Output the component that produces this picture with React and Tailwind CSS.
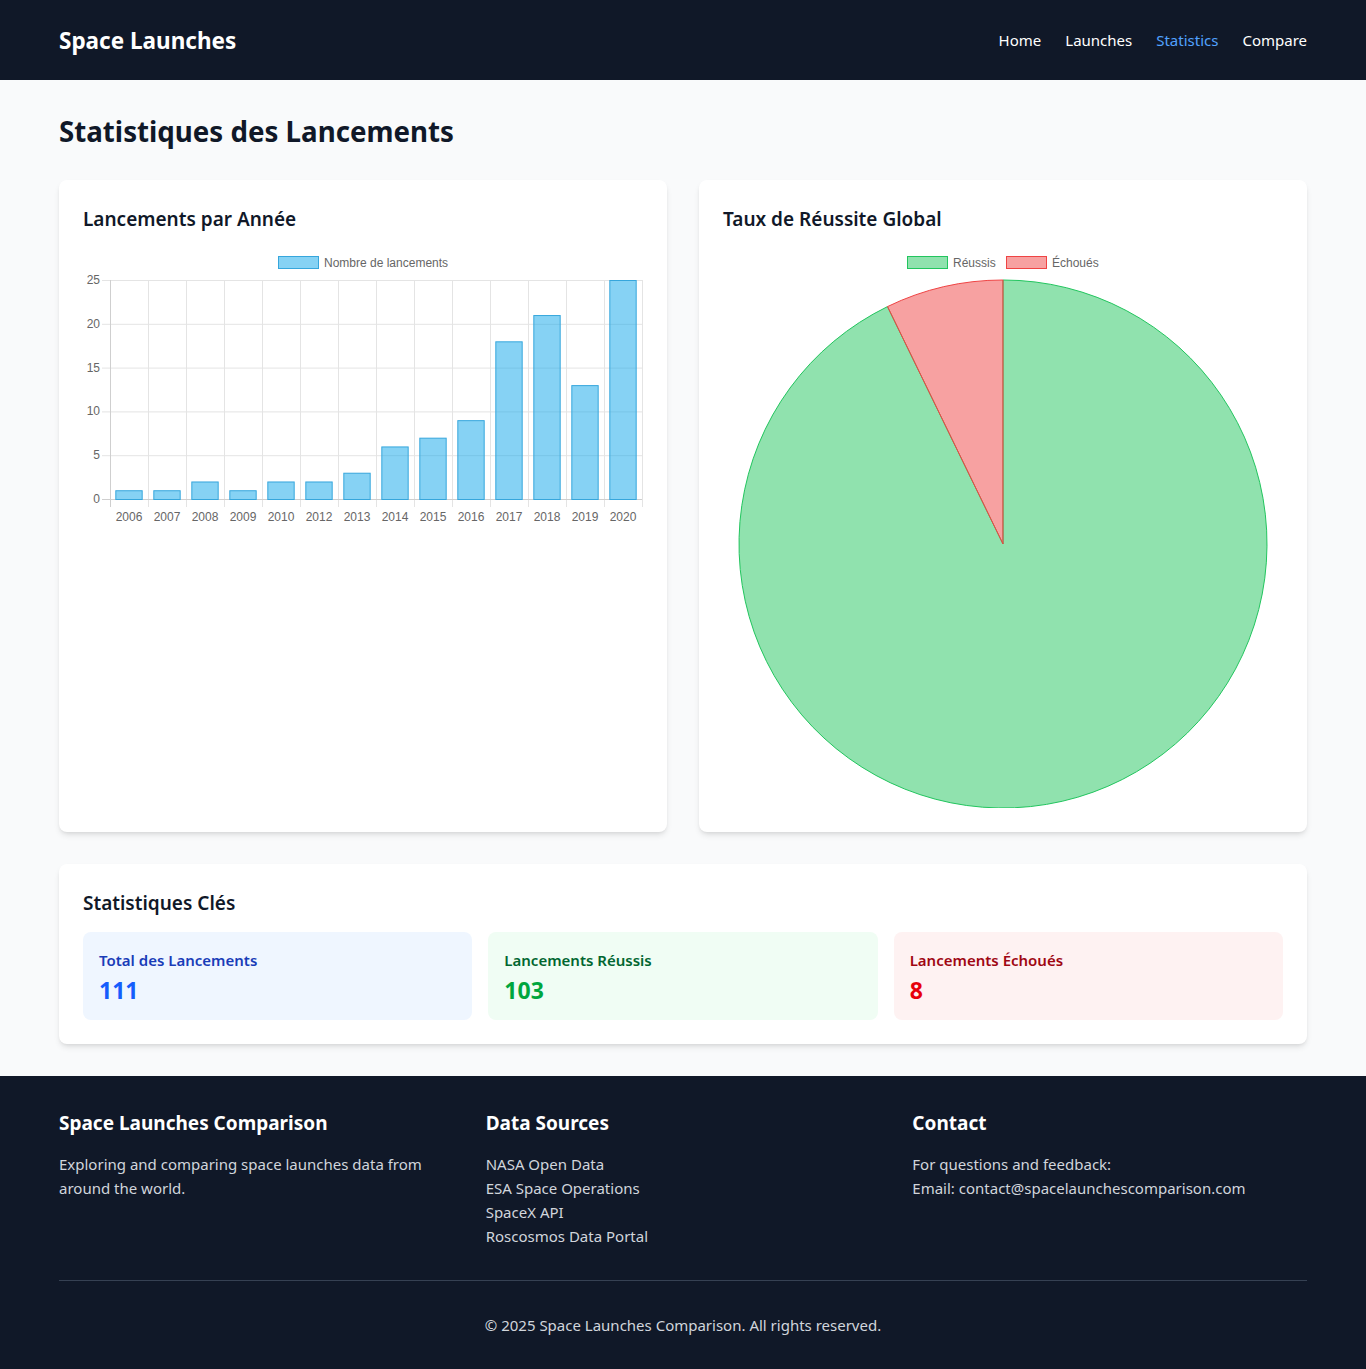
const years = [2006, 2007, 2008, 2009, 2010, 2012, 2013, 2014, 2015, 2016, 2017, 2018, 2019, 2020];
const counts = [1, 1, 2, 1, 2, 2, 3, 6, 7, 9, 18, 21, 13, 25];

function BarChart() {
  const left = 27;
  const right = 559;
  const top = 32;
  const bottom = 251;
  const step = (right - left) / years.length;
  const unit = (bottom - top) / 25;
  const barW = step * 0.72;
  return (
    <svg width="560" height="280" viewBox="0 0 560 280" className="block">
      <g fontFamily="'Liberation Sans', Arial, sans-serif" fontSize="12" fill="#666">
        <rect x="195.5" y="8.5" width="40" height="12" fill="rgba(14,165,233,0.5)" stroke="#36a6dc" />
        <text x="241" y="18.5">Nombre de lancements</text>
        {[0, 5, 10, 15, 20, 25].map(v => {
          const y = bottom - v * unit;
          return (
            <g key={v}>
              <line x1={left - 8} x2={right} y1={y + 0.5} y2={y + 0.5} stroke="#e4e4e4" />
              <text x="17" y={y + 4} textAnchor="end">{v}</text>
            </g>
          );
        })}
        {years.map((_, i) => (
          <line key={i} x1={left + step * i + 0.5} x2={left + step * i + 0.5} y1={top} y2={bottom + 8} stroke="#e4e4e4" />
        ))}
        <line x1={right + 0.5} x2={right + 0.5} y1={top} y2={bottom + 8} stroke="#e4e4e4" />
        <line x1={left + 0.5} x2={left + 0.5} y1={top} y2={bottom + 8} stroke="#cfcfcf" />
        <line x1={left - 8} x2={right} y1={bottom + 0.5} y2={bottom + 0.5} stroke="#cfcfcf" />
        {counts.map((c, i) => {
          const cx = left + step * i + step / 2;
          const h = c * unit;
          return (
            <rect key={i} x={cx - barW / 2 + 0.5} y={bottom - h + 0.5} width={barW - 1} height={h}
              fill="rgba(14,165,233,0.5)" stroke="#36a6dc" strokeWidth="1" />
          );
        })}
        {years.map((y, i) => (
          <text key={y} x={left + step * i + step / 2} y="273" textAnchor="middle">{y}</text>
        ))}
      </g>
    </svg>
  );
}

function PieChart() {
  const cx = 280;
  const cy = 296;
  const r = 264;
  const ang = (8 / 111) * Math.PI * 2;
  const px = cx - r * Math.sin(ang);
  const py = cy - r * Math.cos(ang);
  return (
    <svg width="560" height="560" viewBox="0 0 560 560" className="block">
      <g fontFamily="'Liberation Sans', Arial, sans-serif" fontSize="12" fill="#666">
        <rect x="184.5" y="8.5" width="40" height="12" fill="rgba(34,197,94,0.5)" stroke="#22c55e" />
        <text x="230" y="18.5">Réussis</text>
        <rect x="283.5" y="8.5" width="40" height="12" fill="rgba(239,68,68,0.5)" stroke="#ef4444" />
        <text x="329" y="18.5">Échoués</text>
      </g>
      <path d={`M ${cx} ${cy} L ${cx} ${cy - r} A ${r} ${r} 0 1 1 ${px} ${py} Z`}
        fill="rgba(34,197,94,0.5)" stroke="#22c55e" strokeWidth="1" />
      <path d={`M ${cx} ${cy} L ${cx} ${cy - r} A ${r} ${r} 0 0 0 ${px} ${py} Z`}
        fill="rgba(239,68,68,0.5)" stroke="#ef4444" strokeWidth="1" />
    </svg>
  );
}

function StatBox({ label, value, bg, labelColor, valueColor }) {
  return (
    <div className={`${bg} rounded-lg p-4`}>
      <div className={`${labelColor} text-[15px] leading-6 font-semibold`}>{label}</div>
      <div className={`${valueColor} text-[23px] leading-8 font-bold translate-y-[2px]`}>{value}</div>
    </div>
  );
}

export default function App() {
  return (
    <div className="min-h-screen bg-gray-50 font-['Noto_Sans',sans-serif] text-gray-900">
      <nav className="bg-gray-900 h-20">
        <div className="max-w-7xl mx-auto px-4 h-full flex items-center justify-between">
          <div className="text-white text-[22.5px] leading-8 font-bold translate-y-px">Space Launches</div>
          <div className="flex gap-6 text-[15px] leading-6 text-white">
            <a>Home</a>
            <a>Launches</a>
            <a className="text-blue-400">Statistics</a>
            <a>Compare</a>
          </div>
        </div>
      </nav>

      <main className="max-w-7xl mx-auto px-4 py-8">
        <h1 className="text-[27.7px] leading-9 font-bold mb-8 translate-y-px">Statistiques des Lancements</h1>

        <div className="grid grid-cols-2 gap-8 mb-8">
          <div className="bg-white rounded-lg shadow-md p-6">
            <h2 className="text-[19px] leading-7 font-semibold mb-4 translate-y-px">Lancements par Année</h2>
            <BarChart />
          </div>
          <div className="bg-white rounded-lg shadow-md p-6">
            <h2 className="text-[19px] leading-7 font-semibold mb-4 translate-y-px">Taux de Réussite Global</h2>
            <PieChart />
          </div>
        </div>

        <div className="bg-white rounded-lg shadow-md p-6">
          <h2 className="text-[19px] leading-7 font-semibold mb-4 translate-y-px">Statistiques Clés</h2>
          <div className="grid grid-cols-3 gap-4">
            <StatBox label="Total des Lancements" value="111" bg="bg-blue-50" labelColor="text-blue-800" valueColor="text-blue-600" />
            <StatBox label="Lancements Réussis" value="103" bg="bg-green-50" labelColor="text-green-800" valueColor="text-green-600" />
            <StatBox label="Lancements Échoués" value="8" bg="bg-red-50" labelColor="text-red-800" valueColor="text-red-600" />
          </div>
        </div>
      </main>

      <footer className="bg-gray-900 text-white py-8">
        <div className="max-w-7xl mx-auto px-4">
          <div className="grid grid-cols-3 gap-8">
            <div>
              <h3 className="text-[19px] leading-7 font-bold mb-4 translate-y-px">Space Launches Comparison</h3>
              <p className="text-gray-300 text-[15px] leading-6">Exploring and comparing space launches data from around the world.</p>
            </div>
            <div>
              <h3 className="text-[19px] leading-7 font-bold mb-4 translate-y-px">Data Sources</h3>
              <ul className="text-gray-300 text-[15px] leading-6">
                <li>NASA Open Data</li>
                <li>ESA Space Operations</li>
                <li>SpaceX API</li>
                <li>Roscosmos Data Portal</li>
              </ul>
            </div>
            <div>
              <h3 className="text-[19px] leading-7 font-bold mb-4 translate-y-px">Contact</h3>
              <p className="text-gray-300 text-[15px] leading-6">For questions and feedback:</p>
              <p className="text-gray-300 text-[15px] leading-6">Email: contact@spacelaunchescomparison.com</p>
            </div>
          </div>
          <div className="border-t border-gray-700 mt-8 pt-8 text-center text-gray-300 text-[15px] leading-6">
            © 2025 Space Launches Comparison. All rights reserved.
          </div>
        </div>
      </footer>
    </div>
  );
}
